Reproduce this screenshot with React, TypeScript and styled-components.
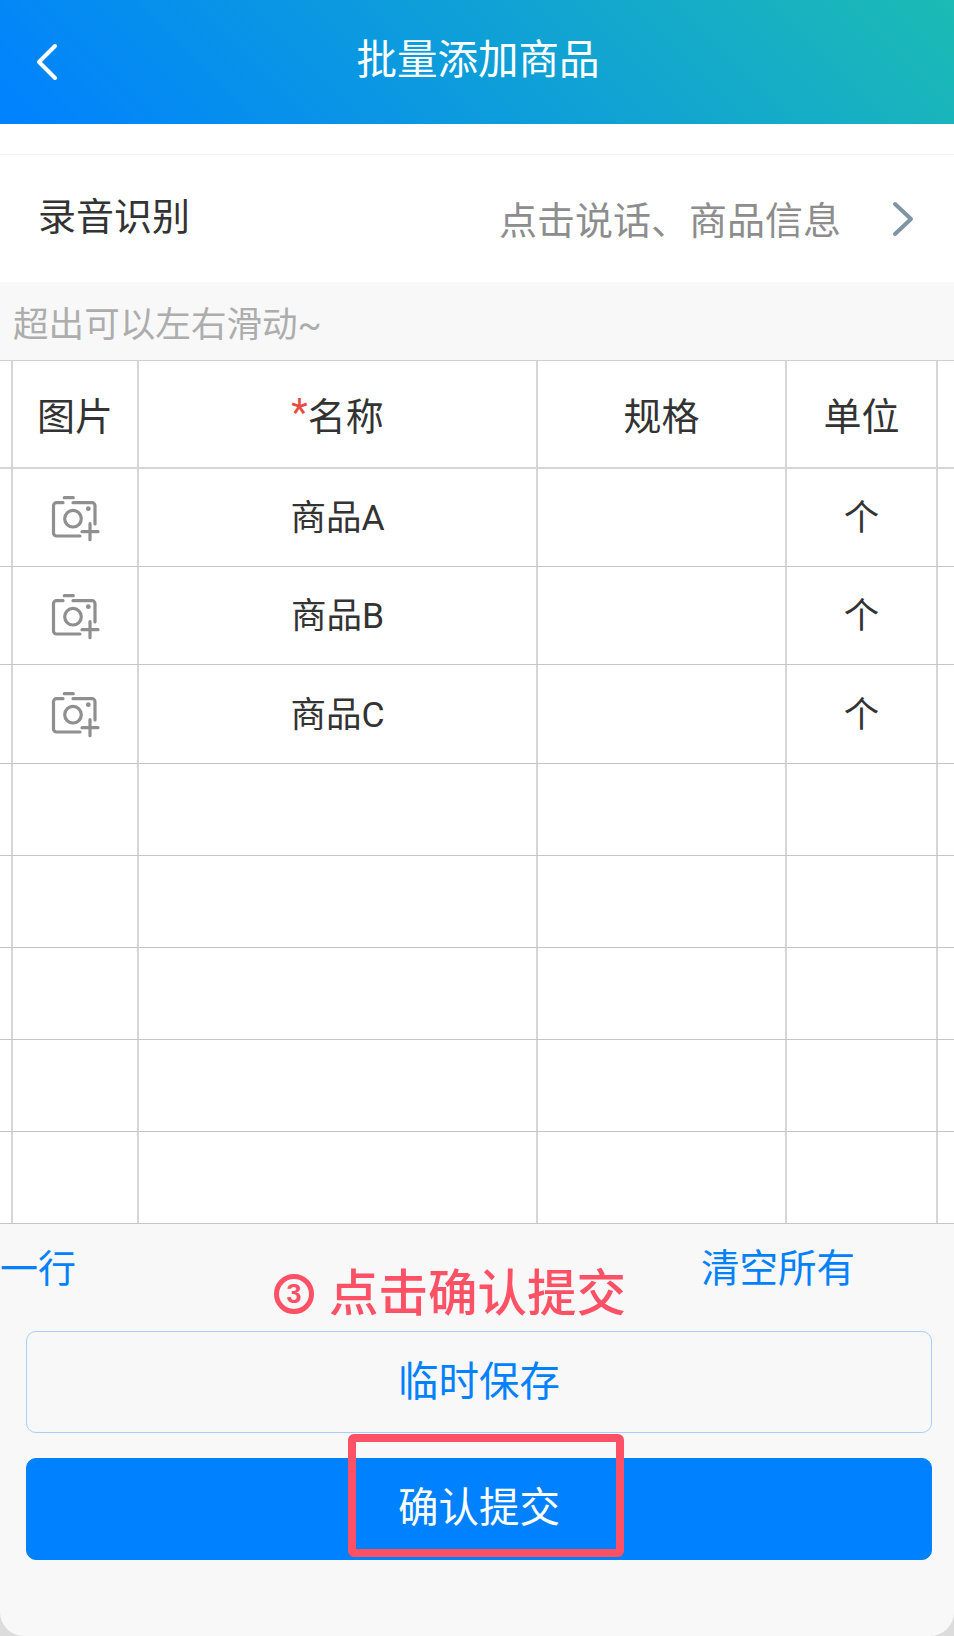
import styled, { createGlobalStyle } from 'styled-components'

const GlobalStyle = createGlobalStyle`
  html, body {
    margin: 0;
    padding: 0;
    background: #dcdcdc;
  }
  * {
    box-sizing: border-box;
  }
`

const Page = styled('div')`
  width: 954px;
  height: 1636px;
  display: flex;
  flex-direction: column;
  overflow: hidden;
  background: #fff;
  font-family: Roboto, "Noto Sans CJK SC", sans-serif;
  color: #333;
`
const Header = styled('header')`
  position: relative;
  flex: 0 0 124px;
  display: flex;
  align-items: center;
  justify-content: center;
  background: linear-gradient(45deg, #0081ff, #1cbbb4);
  color: #fff;
`
const BackIcon = styled('svg')`
  position: absolute;
  left: 34px;
  top: 42px;
  width: 26px;
  height: 40px;
`
const Title = styled('h1')`
  margin: 0 0 3px 2px;
  font-size: 40.5px;
  font-weight: 400;
  line-height: 1;
`
const Spacer = styled('div')`
  flex: 0 0 31px;
  background: #fff;
  border-bottom: 1px solid #f3f3f3;
`
const VoiceRow = styled('div')`
  flex: 0 0 127px;
  display: flex;
  align-items: center;
  padding: 0 40px 0 38px;
  background: #fff;
`
const VoiceLabel = styled('span')`
  flex: 1;
  font-size: 38px;
  margin-bottom: 10px;
`
const VoiceHint = styled('span')`
  font-size: 38px;
  color: #8d8d8d;
  margin-bottom: 3px;
`
const RowChevron = styled('svg')`
  width: 24px;
  height: 36px;
  margin: 0 -1px 0 50px;
`
const ScrollHint = styled('div')`
  flex: 0 0 78px;
  display: flex;
  align-items: center;
  padding-left: 13px;
  background: #f8f8f8;
  font-size: 35.6px;
  color: #adadad;
`
const Table = styled('div')`
  flex: 0 0 864px;
  display: flex;
  flex-direction: column;
  background: #fff;
  border-top: 1px solid #cfcfcf;
`
const Row = styled('div')<{ $height: number; $head?: boolean }>`
  flex: 0 0 ${({ $height }) => $height}px;
  display: grid;
  grid-template-columns: 13px 126px 399px 249px 151px 16px;
  border-bottom: ${({ $head }) => ($head ? '2px solid #d6d6d6' : '1px solid #c6c6c6')};
`
const Cell = styled('div')<{ $head?: boolean }>`
  display: flex;
  align-items: center;
  justify-content: center;
  border-right: 2px solid #d6d6d6;
  font-size: ${({ $head }) => ($head ? '38px' : '35.5px')};
  padding-bottom: ${({ $head }) => ($head ? '2px' : '6px')};
  &:last-child {
    border-right: 0;
  }
`
const Required = styled('span')`
  color: #e54d42;
`
const CameraIcon = styled('svg')`
  width: 50px;
  height: 50px;
  margin-top: 6px;
  color: #8f8f8f;
`
const Footer = styled('footer')`
  position: relative;
  flex: 1;
  display: flex;
  flex-direction: column;
  background: #f8f8f8;
  border-radius: 0 0 24px 24px;
`
const FooterBackdrop = styled('div')`
  flex: 1;
  display: flex;
  flex-direction: column;
  background: #dcdcdc;
`
const Actions = styled('div')`
  height: 107px;
  display: flex;
  justify-content: space-between;
  align-items: flex-start;
  padding: 17px 99px 0 0;
  font-size: 38px;
  line-height: 56px;
  color: #0081ff;
`
const ClearAll = styled('span')`
  font-size: 38.5px;
`
const Button = styled('button')<{ $primary?: boolean }>`
  display: block;
  height: 102px;
  margin: 0 22px 25px 26px;
  border: 1px solid ${({ $primary }) => ($primary ? '#0081ff' : '#a6d0f8')};
  border-radius: 10px;
  background: ${({ $primary }) => ($primary ? '#0081ff' : '#f8f8f8')};
  color: ${({ $primary }) => ($primary ? '#fff' : '#0081ff')};
  font-family: inherit;
  font-size: 40.5px;
  padding: 0 0 ${({ $primary }) => ($primary ? '10px' : '7px')};
`
const Annotation = styled('div')`
  position: absolute;
  left: 274px;
  top: 38px;
  display: flex;
  align-items: center;
  gap: 15px;
  font-size: 49.5px;
  line-height: 64px;
  font-weight: 500;
  color: #ff5165;
  white-space: nowrap;
`
const StepBadge = styled('span')`
  width: 40px;
  height: 40px;
  display: flex;
  align-items: center;
  justify-content: center;
  border: 5px solid #ff5165;
  border-radius: 50%;
  font-family: "Liberation Sans", sans-serif;
  font-size: 27px;
  line-height: 1;
  font-weight: 700;
`
const Highlight = styled('div')`
  position: absolute;
  left: 348px;
  top: 210px;
  width: 276px;
  height: 123px;
  border: 8px solid #ff5165;
  border-radius: 6px;
`

const Camera = (): JSX.Element => (
  <CameraIcon viewBox='0 0 50 50' fill='none' stroke='currentColor' strokeWidth='3.2' strokeLinecap='round'>
    <path d='M13 9.7H6.5a3 3 0 0 0-3 3V40a3 3 0 0 0 3 3H30' />
    <path d='M23 9.7H42a3 3 0 0 1 3 3V31' />
    <path d='M14.3 4.7H23.3' />
    <circle cx='23' cy='25.7' r='8.3' />
    <circle cx='38.3' cy='15.7' r='2.4' fill='currentColor' stroke='none' />
    <path d='M40 30.7V46.7M32 38.7H48' />
  </CameraIcon>
)

const products = [
  { name: '商品A', height: 98 },
  { name: '商品B', height: 98 },
  { name: '商品C', height: 99 }
]
const emptyRows = [92, 92, 92, 92, 92]

const App = (): JSX.Element => (
  <Page>
    <GlobalStyle />
    <Header>
      <BackIcon viewBox='0 0 26 40' fill='none' stroke='#fff' strokeWidth='4' strokeLinecap='round' strokeLinejoin='round'>
        <path d='M21 4L5 20L21 36' />
      </BackIcon>
      <Title>批量添加商品</Title>
    </Header>
    <Spacer />
    <VoiceRow>
      <VoiceLabel>录音识别</VoiceLabel>
      <VoiceHint>点击说话、商品信息</VoiceHint>
      <RowChevron viewBox='0 0 24 36' fill='none' stroke='#7f95a3' strokeWidth='4' strokeLinecap='round' strokeLinejoin='round'>
        <path d='M4 3L20 18L4 33' />
      </RowChevron>
    </VoiceRow>
    <ScrollHint>超出可以左右滑动~</ScrollHint>
    <Table>
      <Row $height={108} $head>
        <Cell />
        <Cell $head>图片</Cell>
        <Cell $head><Required>*</Required>名称</Cell>
        <Cell $head>规格</Cell>
        <Cell $head>单位</Cell>
        <Cell />
      </Row>
      {products.map((product) => (
        <Row key={product.name} $height={product.height}>
          <Cell />
          <Cell><Camera /></Cell>
          <Cell>{product.name}</Cell>
          <Cell />
          <Cell>个</Cell>
          <Cell />
        </Row>
      ))}
      {emptyRows.map((height, index) => (
        <Row key={index} $height={height}>
          <Cell />
          <Cell />
          <Cell />
          <Cell />
          <Cell />
          <Cell />
        </Row>
      ))}
    </Table>
    <FooterBackdrop>
      <Footer>
        <Actions>
          <span>一行</span>
          <ClearAll>清空所有</ClearAll>
        </Actions>
        <Button>临时保存</Button>
        <Button $primary>确认提交</Button>
        <Annotation>
          <StepBadge>3</StepBadge>
          点击确认提交
        </Annotation>
        <Highlight />
      </Footer>
    </FooterBackdrop>
  </Page>
)

export default App
